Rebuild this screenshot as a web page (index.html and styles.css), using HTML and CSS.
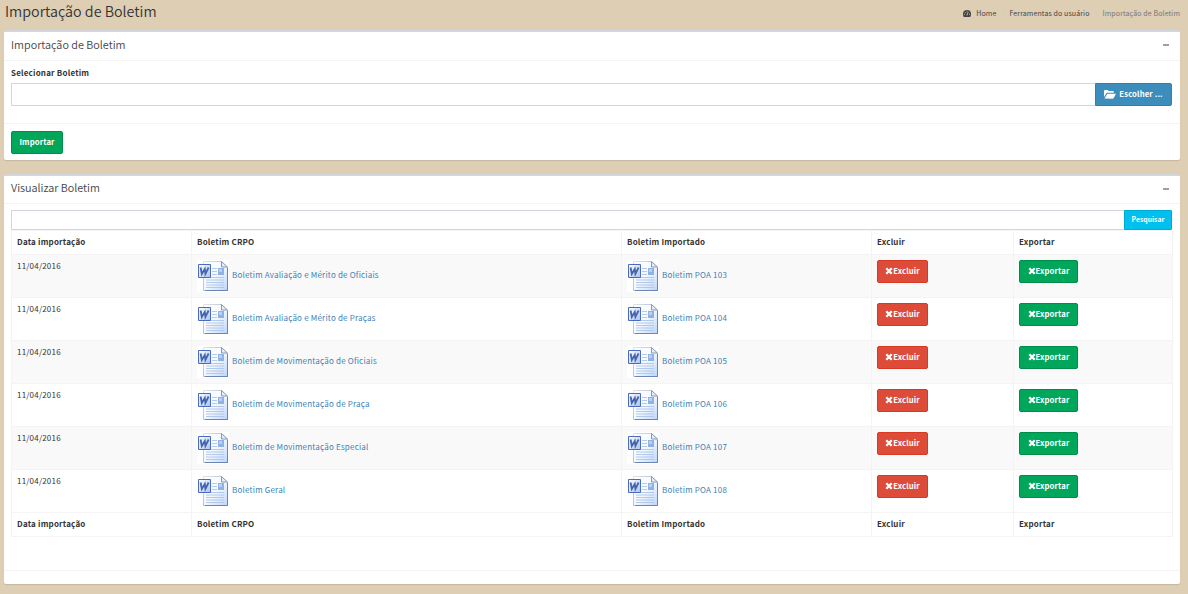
FILE: index.html
```html
<!DOCTYPE html>
<html lang="pt-BR">
<head>
<meta charset="utf-8">
<title>Importação de Boletim</title>
<link rel="stylesheet" href="styles.css">
</head>
<body>
<svg class="defs" width="0" height="0" aria-hidden="true">
  <defs>
    <linearGradient id="paper" x1="0" y1="0" x2="1" y2="1"><stop offset="0" stop-color="#fff"/><stop offset=".5" stop-color="#f4f9ff"/><stop offset="1" stop-color="#bcd5fb"/></linearGradient>
    <linearGradient id="edge" x1="0" y1="0" x2="1" y2="1"><stop offset="0" stop-color="#dfe4ea"/><stop offset=".5" stop-color="#b5c1d1"/><stop offset="1" stop-color="#5a76a5"/></linearGradient>
    <linearGradient id="badge" x1="0" y1="0" x2="1" y2="1"><stop offset="0" stop-color="#fff"/><stop offset="1" stop-color="#a9c3f2"/></linearGradient>
    <symbol id="word" viewBox="0 0 32 32">
      <path fill="#fff" d="M0 0h32v32H0z"/>
      <path d="M6.500 1.500h18l6 6v23h-24z" fill="url(#paper)" stroke="url(#edge)"/>
      <path d="M8 30.500h22.500V8" fill="none" stroke="#6b86b2"/>
      <path d="M24.500 1.500v5.500h6z" fill="#e5edf8" stroke="#7c90ac" stroke-width=".9"/>
      <path d="M15 8.500h5M15 11.500h5M15 14.500h5M9 17.500h18M9 20h18M9 22.500h18M9 25h18M9 27.500h18" stroke="#abc4e8" stroke-width=".9"/>
      <path d="M21 8h6v7h-6z" fill="#8fb2e2"/><path d="M22 9h3v3h-3z" fill="#b8d1f2"/>
      <path d="M1.500 4.500h12v13h-12z" fill="url(#badge)" stroke="#4a6cc0"/>
      <path d="M3.600 7.500l1.200 6.500 3-5 .6 5 3.200-6.500" fill="none" stroke="#4464ac" stroke-width="1.800"/>
    </symbol>
    <symbol id="times" viewBox="0 0 8 8"><path d="M1.300 1.300l5.400 5.400M6.700 1.300L1.300 6.700" stroke="#fff" stroke-width="2.300"/></symbol>
  </defs>
</svg>
<header class="page-head">
  <h1>Importação de Boletim</h1>
  <nav class="crumbs">
    <a class="home"><svg width="8" height="7" viewBox="0 0 16 14"><path fill="#444" d="M8 0a8 8 0 0 0-8 8q0 3.500 1.500 6h13Q16 11.500 16 8a8 8 0 0 0-8-8z"/><path stroke="#ddceb4" stroke-width="1.600" d="M8 11l1.200-6M2 8.500h2M12 8.500h2M3.800 4l1.400 1.200M7 2.300h2M11 4.800l1.300-1"/></svg><span>Home</span></a>
    <i>&gt;</i><a class="tools">Ferramentas do usuário</a><i>&gt;</i><span class="here">Importação de Boletim</span>
  </nav>
</header>
<section class="box import">
  <div class="box-head"><h2>Importação de Boletim</h2><span class="minus"></span></div>
  <div class="box-body">
    <label>Selecionar Boletim</label>
    <div class="group"><input type="text"><button class="btn blue"><svg width="12" height="9" viewBox="0 0 12 9"><path fill="#fff" d="M0 7V1q0-1 1-1h2.500q.8 0 1 1H9q.8 0 .8 1v.8H3.500q-.8 0-1.300.7zM.5 8.600l2.400-4.200q.4-.7 1.200-.7H12L9.700 8q-.4.700-1.200.7z"/></svg><span>Escolher ...</span></button></div>
  </div>
  <div class="box-foot"><button class="btn green"><span>Importar</span></button></div>
</section>
<section class="box view">
  <div class="box-head"><h2>Visualizar Boletim</h2><span class="minus"></span></div>
  <div class="box-body">
    <div class="group"><input type="text"><button class="btn cyan"><span>Pesquisar</span></button></div>
    <table>
      <colgroup><col class="c1"><col class="c2"><col class="c3"><col class="c4"><col class="c5"></colgroup>
      <thead><tr><th>Data importação</th><th>Boletim CRPO</th><th>Boletim Importado</th><th>Excluir</th><th>Exportar</th></tr></thead>
      <tbody>
        <tr><td>11/04/2016</td><td><a><svg class="doc"><use href="#word"/></svg><span>Boletim Avaliação e Mérito de Oficiais</span></a></td><td><a><svg class="doc"><use href="#word"/></svg><span>Boletim POA 103</span></a></td><td><button class="btn red"><svg class="x"><use href="#times"/></svg><span>Excluir</span></button></td><td><button class="btn green"><svg class="x"><use href="#times"/></svg><span>Exportar</span></button></td></tr>
        <tr><td>11/04/2016</td><td><a><svg class="doc"><use href="#word"/></svg><span>Boletim Avaliação e Mérito de Praças</span></a></td><td><a><svg class="doc"><use href="#word"/></svg><span>Boletim POA 104</span></a></td><td><button class="btn red"><svg class="x"><use href="#times"/></svg><span>Excluir</span></button></td><td><button class="btn green"><svg class="x"><use href="#times"/></svg><span>Exportar</span></button></td></tr>
        <tr><td>11/04/2016</td><td><a><svg class="doc"><use href="#word"/></svg><span>Boletim de Movimentação de Oficiais</span></a></td><td><a><svg class="doc"><use href="#word"/></svg><span>Boletim POA 105</span></a></td><td><button class="btn red"><svg class="x"><use href="#times"/></svg><span>Excluir</span></button></td><td><button class="btn green"><svg class="x"><use href="#times"/></svg><span>Exportar</span></button></td></tr>
        <tr><td>11/04/2016</td><td><a><svg class="doc"><use href="#word"/></svg><span>Boletim de Movimentação de Praça</span></a></td><td><a><svg class="doc"><use href="#word"/></svg><span>Boletim POA 106</span></a></td><td><button class="btn red"><svg class="x"><use href="#times"/></svg><span>Excluir</span></button></td><td><button class="btn green"><svg class="x"><use href="#times"/></svg><span>Exportar</span></button></td></tr>
        <tr><td>11/04/2016</td><td><a><svg class="doc"><use href="#word"/></svg><span>Boletim de Movimentação Especial</span></a></td><td><a><svg class="doc"><use href="#word"/></svg><span>Boletim POA 107</span></a></td><td><button class="btn red"><svg class="x"><use href="#times"/></svg><span>Excluir</span></button></td><td><button class="btn green"><svg class="x"><use href="#times"/></svg><span>Exportar</span></button></td></tr>
        <tr><td>11/04/2016</td><td><a><svg class="doc"><use href="#word"/></svg><span>Boletim Geral</span></a></td><td><a><svg class="doc"><use href="#word"/></svg><span>Boletim POA 108</span></a></td><td><button class="btn red"><svg class="x"><use href="#times"/></svg><span>Excluir</span></button></td><td><button class="btn green"><svg class="x"><use href="#times"/></svg><span>Exportar</span></button></td></tr>
      </tbody>
      <tfoot><tr><th>Data importação</th><th>Boletim CRPO</th><th>Boletim Importado</th><th>Excluir</th><th>Exportar</th></tr></tfoot>
    </table>
  </div>
  <div class="box-foot"></div>
</section>
</body>
</html>
```
FILE: styles.css
```css
* { box-sizing: border-box; }
body { margin: 0; padding: 0 8px 0 4px; height: 594px; overflow: hidden; background: #ddceb4; color: #333; font: 8px/13px "Noto Sans CJK SC", "Noto Sans", sans-serif; letter-spacing: .2px; }
.defs { display: block; height: 0; }
.page-head { display: flex; justify-content: space-between; height: 30px; }
h1, h2 { margin: 0; font-weight: 350; white-space: nowrap; }
h1 { padding-left: 1px; font-size: 14.3px; line-height: 22px; letter-spacing: 0; color: #333; }
.crumbs { display: flex; height: 13px; margin-top: 7px; font-size: 7px; letter-spacing: .12px; color: #444; white-space: nowrap; }
.crumbs i { width: 13px; text-align: center; font-style: normal; color: #ccc; font-size: 6px; }
.home { display: flex; align-items: center; gap: 5px; }
.here { color: #777; }
.box { background: #fff; border-top: 2px solid #d2d6de; border-radius: 2px; box-shadow: 0 1px 1px rgba(0,0,0,.1); }
.import { height: 130px; margin-bottom: 14px; }
.view { height: 410px; }
.box-head { display: flex; justify-content: space-between; height: 29px; padding: 0 11px 0 7px; border-bottom: 1px solid #f4f4f4; }
.view .box-head { height: 28px; }
h2 { font-size: 10.8px; line-height: 24px; letter-spacing: 0; color: #444; }
.view h2 { line-height: 23px; }
.minus { width: 6px; height: 2px; margin-top: 12px; background: #97a0b3; }
.box-body { padding: 6px 8px 0 7px; }
.import .box-body { height: 62px; }
.view .box-body { height: 366px; padding-right: 7px; }
label { display: block; height: 16px; font-weight: 700; line-height: 12px; }
.group { display: flex; height: 23px; }
.view .group { height: 20px; margin-right: 1px; }
input { flex: 1; min-width: 0; padding: 0 8px; border: 1px solid #d2d6de; border-right: 0; border-radius: 0; background: #fff; font: inherit; }
.box-foot { padding: 7px; border-top: 1px solid #f4f4f4; }
.btn { display: flex; align-items: center; justify-content: center; height: 23px; padding: 0 0 1px; border: 1px solid; border-radius: 2px; color: #fff; font: 700 7.7px/13px "Noto Sans CJK SC", "Noto Sans", sans-serif; letter-spacing: .15px; white-space: nowrap; }
.btn span { padding-bottom: 1px; }
.blue { width: 77px; gap: 3px; background: #3c8dbc; border-color: #367fa9; border-radius: 0 2px 2px 0; }
.cyan { width: 48px; height: 20px; background: #00c0ef; border-color: #00acd6; border-radius: 0 1px 1px 0; font-size: 6.8px; letter-spacing: 0; }
.cyan span { padding: 0; }
.green { width: 52px; background: #00a65a; border-color: #008d4c; }
.red { width: 51px; background: #dd4b39; border-color: #d73925; }
td .green { width: 59px; }
.x { width: 8px; height: 8px; }
table { width: 1162px; table-layout: fixed; border-spacing: 0; border: solid #f4f4f4; border-width: 0 1px 1px 0; }
.c1 { width: 180px; } .c2 { width: 430px; } .c3 { width: 250px; } .c4 { width: 142px; } .c5 { width: 159px; }
th, td { padding: 5px 5px 0; border: solid #f4f4f4; border-width: 1px 0 0 1px; text-align: left; vertical-align: top; line-height: 12px; }
th { height: 24px; font-weight: 700; }
td { height: 43px; }
tbody tr:nth-child(odd) { background: #f9f9f9; }
td a { display: flex; align-items: center; gap: 3px; color: #3c7fb5; }
td a span { padding-bottom: 3px; }
.doc { width: 32px; height: 32px; }
```
